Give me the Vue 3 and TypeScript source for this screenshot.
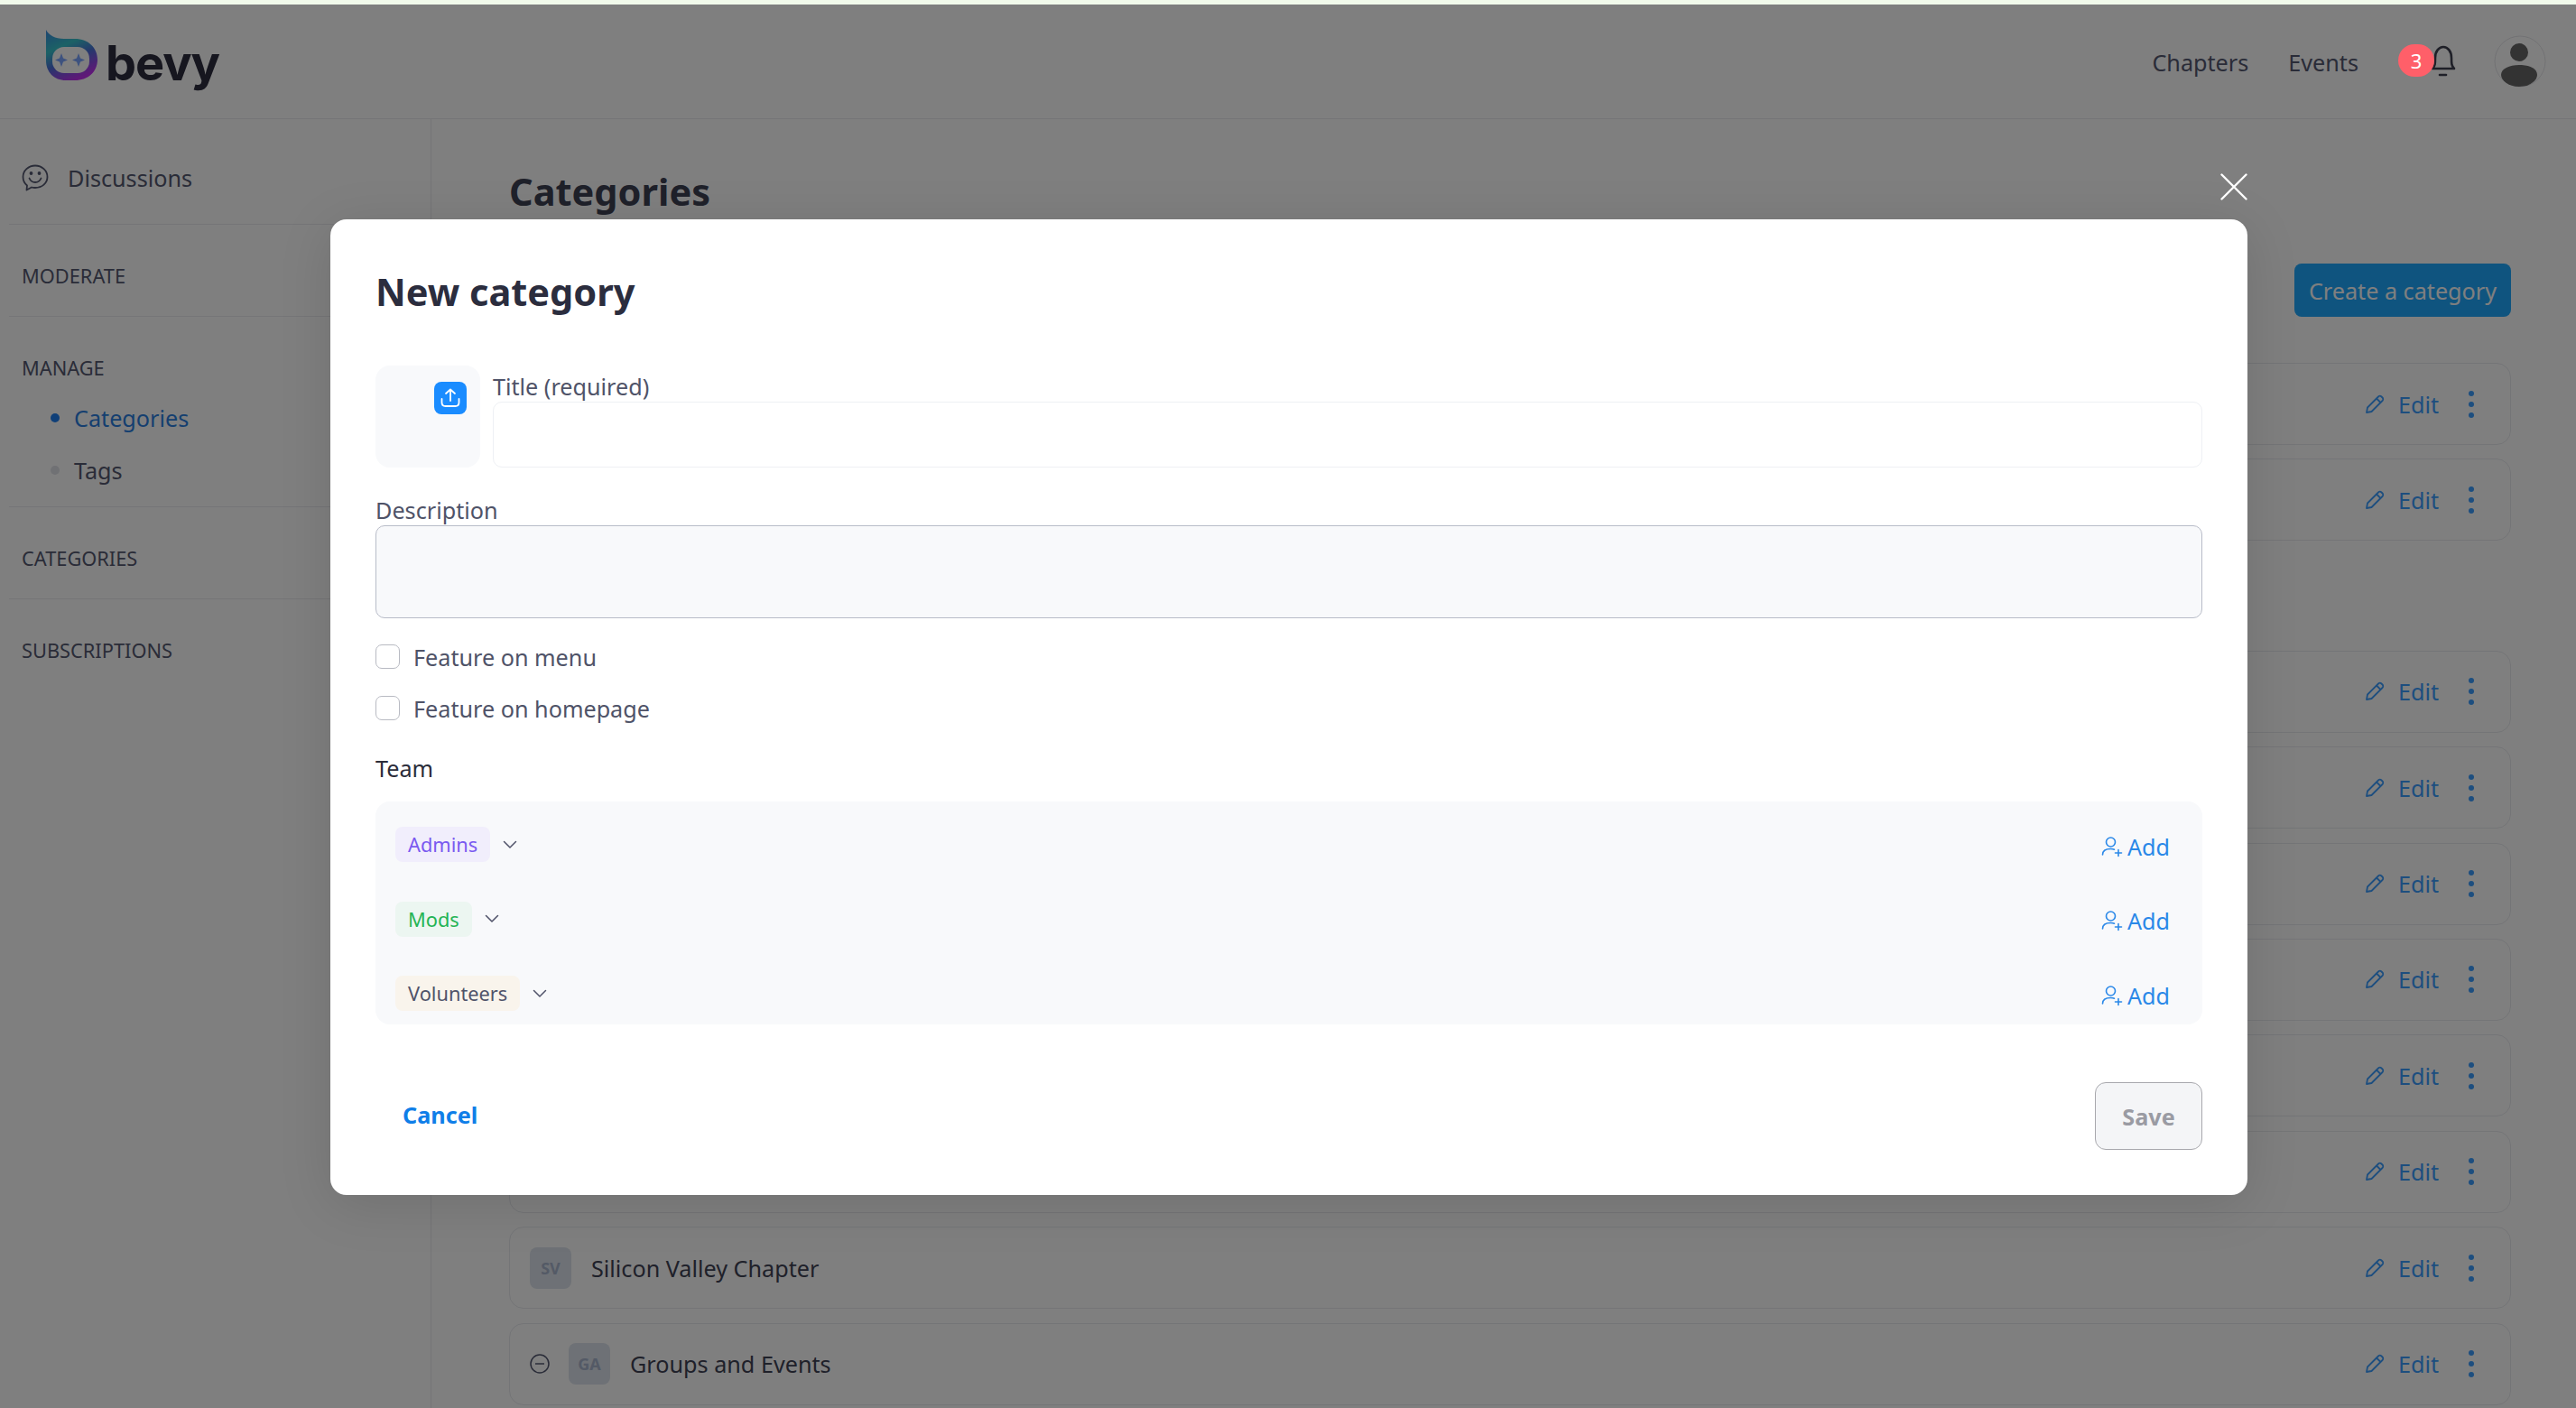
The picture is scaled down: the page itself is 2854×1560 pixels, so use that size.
<script setup lang="ts">
interface Row {
  id: number;
  name?: string;
  initials?: string;
  collapsible?: boolean;
  groupStart?: boolean;
}

const rows: Row[] = [
  { id: 1 },
  { id: 2 },
  { id: 3, groupStart: true },
  { id: 4 },
  { id: 5 },
  { id: 6 },
  { id: 7 },
  { id: 8 },
  { id: 9, name: 'Silicon Valley Chapter', initials: 'SV' },
  { id: 10, name: 'Groups and Events', initials: 'GA', collapsible: true }
];

const teams = [
  { name: 'Admins', kind: 'admins' },
  { name: 'Mods', kind: 'mods' },
  { name: 'Volunteers', kind: 'volunteers' }
];
</script>

<template>
  <div class="page">
    <div class="top-strip"></div>

    <header class="header">
      <div class="logo">
        <svg class="logo-mark" width="57" height="56" viewBox="0 0 57 56">
          <defs>
            <linearGradient id="logoGrad" x1="0.1" y1="0" x2="0.55" y2="1">
              <stop offset="0" stop-color="#3a8fe0" />
              <stop offset="0.35" stop-color="#38c4cc" />
              <stop offset="0.62" stop-color="#4a70d8" />
              <stop offset="1" stop-color="#c030f0" />
            </linearGradient>
          </defs>
          <path
            d="M0 0C3 6 10 10 20 10H32C47 10 57 20 57 33C57 47 46 56 32 56H22C9 56 0 47 0 34Z"
            fill="url(#logoGrad)"
          />
          <rect x="7" y="19" width="41" height="29" rx="13" fill="#fff" />
          <path d="M17 26L19 31.500L24 33.500L19 35.500L17 41L15 35.500L10 33.500L15 31.500Z" fill="#7aa4ff" />
          <path d="M36 26L38 31.500L43 33.500L38 35.500L36 41L34 35.500L29 33.500L34 31.500Z" fill="#7aa4ff" />
        </svg>
        <span class="logo-text">bevy</span>
      </div>

      <nav class="nav">
        <span class="nav-link">Chapters</span>
        <span class="nav-link">Events</span>
        <span class="bell-wrap">
          <span class="badge">3</span>
          <svg class="bell" width="30" height="38" viewBox="0 0 30 38" fill="none" stroke="#3f4150" stroke-width="2.600" stroke-linecap="round" stroke-linejoin="round">
            <path d="M4 27C7 24 7 21 7 15C7 8 11 3 16 3C21 3 25 8 25 15C25 21 25 24 28 27Z" />
            <path d="M12 34H19" />
          </svg>
        </span>
        <span class="avatar">
          <svg width="58" height="58" viewBox="0 0 58 58">
            <circle cx="29" cy="29" r="28" fill="#fff" stroke="#e4e4e8" stroke-width="1" />
            <circle cx="28" cy="19" r="10" fill="#666" />
            <path d="M8 44C8 37 17 33 28 33C39 33 48 37 48 44C48 50 40 57 28 57C16 57 8 50 8 44Z" fill="#666" />
          </svg>
        </span>
      </nav>
    </header>

    <div class="body">
      <aside class="sidebar">
        <div class="side-top">
          <svg width="30" height="30" viewBox="0 0 30 30" fill="none" stroke="#545870" stroke-width="1.800" stroke-linecap="round" stroke-linejoin="round">
            <path d="M15 1.500C22.500 1.500 28.500 7 28.500 14C28.500 21 22.500 26 15 26C13.500 26 12 25.800 11 25.500L5.500 28.500L6 23.500C3 21 1.500 18 1.500 14C1.500 7 7.500 1.500 15 1.500Z" />
            <path d="M8.500 15.500C10 19 12.500 20 15 20C17.500 20 20 19 21.500 15.500" />
            <circle cx="10.500" cy="10" r="1" fill="#545870" />
            <circle cx="19.500" cy="10" r="1" fill="#545870" />
          </svg>
          <span>Discussions</span>
        </div>
        <div class="side-section">MODERATE</div>
        <div class="side-section manage">
          <div>MANAGE</div>
          <div class="side-link active"><i></i>Categories</div>
          <div class="side-link"><i></i>Tags</div>
        </div>
        <div class="side-section">CATEGORIES</div>
        <div class="side-section last">SUBSCRIPTIONS</div>
      </aside>

      <main class="main">
        <h1>Categories</h1>
        <div class="main-actions">
          <button class="create-btn">Create a category</button>
        </div>
        <div class="rows">
          <div v-for="row in rows" :key="row.id" class="row" :class="{ 'group-start': row.groupStart }">
            <svg v-if="row.collapsible" class="collapse" width="22" height="22" viewBox="0 0 22 22" fill="none" stroke="#545870" stroke-width="1.500">
              <circle cx="11" cy="11" r="10" />
              <path d="M6 11H16" />
            </svg>
            <span v-if="row.initials" class="initials">{{ row.initials }}</span>
            <span v-if="row.name" class="row-name">{{ row.name }}</span>
            <span class="edit">
              <svg width="22" height="22" viewBox="0 0 22 22" fill="none" stroke="#3a9cff" stroke-width="1.800" stroke-linejoin="round">
                <path d="M2 20L3 14.500L15 2.500C16 1.500 17.500 1.500 18.500 2.500L19.500 3.500C20.500 4.500 20.500 6 19.500 7L7.500 19Z" />
                <path d="M13 4.500L17.500 9" />
              </svg>
              Edit
            </span>
            <span class="dots"><i></i><i></i><i></i></span>
          </div>
        </div>
      </main>
    </div>

    <div class="overlay">
      <div class="modal">
        <svg class="close" width="30" height="30" viewBox="0 0 30 30" stroke="#fff" stroke-width="2.400" stroke-linecap="round">
          <path d="M1.500 1.500L28.500 28.500M28.500 1.500L1.500 28.500" />
        </svg>

        <h2>New category</h2>

        <div class="title-row">
          <div class="upload">
            <span class="upload-btn">
              <svg width="24" height="24" viewBox="0 0 24 24" fill="none" stroke="#fff" stroke-width="1.800" stroke-linecap="round" stroke-linejoin="round">
                <path d="M12 15V2.500M7 7L12 2.500L17 7" />
                <path d="M2.500 13V17C2.500 19.500 4 21 6.500 21H17.500C20 21 21.500 19.500 21.500 17V13" />
              </svg>
            </span>
          </div>
          <div class="title-field">
            <label>Title (required)</label>
            <input type="text" />
          </div>
        </div>

        <label class="desc-label">Description</label>
        <textarea></textarea>

        <div class="check first"><span class="box"></span>Feature on menu</div>
        <div class="check"><span class="box"></span>Feature on homepage</div>

        <div class="team-label">Team</div>
        <div class="team">
          <div v-for="team in teams" :key="team.name" class="team-row">
            <span class="chip" :class="team.kind">{{ team.name }}</span>
            <svg class="chevron" width="16" height="10" viewBox="0 0 16 10" fill="none" stroke="#50536a" stroke-width="1.500" stroke-linecap="round" stroke-linejoin="round">
              <path d="M1.500 1.500L8 8L14.500 1.500" />
            </svg>
            <span class="add">
              <svg width="24" height="24" viewBox="0 0 24 24" fill="none" stroke="#2a88e8" stroke-width="1.600" stroke-linecap="round">
                <circle cx="10.500" cy="7" r="5" />
                <path d="M1.500 21C1.500 16.500 5 14.500 10.500 14.500C12 14.500 13.500 14.700 14.500 15.200" />
                <path d="M19 15.500V22.500M15.500 19H22.500" />
              </svg>
              Add
            </span>
          </div>
        </div>

        <div class="footer">
          <span class="cancel">Cancel</span>
          <button class="save">Save</button>
        </div>
      </div>
    </div>
  </div>
</template>

<style>
html,
body {
  margin: 0;
  background: #fff;
}
</style>

<style scoped>
* {
  box-sizing: border-box;
}

.page {
  position: relative;
  width: 2854px;
  height: 1560px;
  overflow: hidden;
  background: #fff;
  font-family: "Noto Sans", sans-serif;
  color: #545870;
}

.top-strip {
  height: 5px;
  background: #f1faeb;
}

.header {
  height: 127px;
  display: flex;
  align-items: center;
  justify-content: space-between;
  padding: 0 33px 0 51px;
  border-bottom: 1px solid #eaebef;
}

.logo {
  display: flex;
  align-items: flex-start;
  gap: 9px;
  height: 62px;
  margin-top: -8px;
}

.logo-text {
  font-family: Inter, sans-serif;
  font-size: 54px;
  line-height: 62px;
  font-weight: 700;
  color: #2c2c3e;
  letter-spacing: -1px;
  margin-top: 6px;
}

.nav {
  display: flex;
  align-items: center;
  font-size: 25.200px;
}

.nav-link {
  margin-right: 44px;
  margin-top: 1px;
}

.bell-wrap {
  position: relative;
  width: 64px;
  height: 38px;
  margin-right: 42px;
  display: block;
}

.bell {
  position: absolute;
  right: 0;
  top: 0;
}

.badge {
  position: absolute;
  left: 0;
  top: 0;
  z-index: 20;
  width: 40px;
  height: 36px;
  border-radius: 18px;
  background: #ff5f69;
  color: #fff;
  font-size: 22px;
  line-height: 36px;
  text-align: center;
}

.avatar {
  display: block;
  width: 58px;
  height: 58px;
}

.body {
  display: flex;
  height: 1428px;
}

.sidebar {
  width: 478px;
  flex-shrink: 0;
  border-right: 1px solid #eaebef;
  padding-left: 10px;
}

.side-top {
  height: 117px;
  display: flex;
  align-items: center;
  gap: 21px;
  padding: 14px 0 0 14px;
  font-size: 25.200px;
  border-bottom: 1px solid #eaebef;
}

.side-section {
  height: 102px;
  padding: 42px 0 0 14px;
  font-size: 21.800px;
  line-height: 30px;
  border-bottom: 1px solid #eaebef;
}

.side-section.manage {
  height: 211px;
}

.side-section.last {
  border-bottom: 0;
}

.side-link {
  display: flex;
  align-items: center;
  height: 36px;
  margin-top: 22px;
  font-size: 25.200px;
  padding-left: 32px;
  color: #545870;
}

.manage .side-link:first-of-type {
  margin-top: -9px;
}

.side-link i {
  width: 10px;
  height: 10px;
  border-radius: 50%;
  background: #e0e2e8;
  margin-right: 16px;
}

.side-link.active {
  color: #2b7fe0;
}

.side-link.active i {
  background: #1f7ef0;
}

.main {
  flex: 1;
  padding: 0 72px 0 86px;
}

h1 {
  margin: 52px 0 0;
  font-size: 41.500px;
  line-height: 56px;
  font-weight: 700;
  color: #3f4254;
}

.main-actions {
  display: flex;
  justify-content: flex-end;
  margin-top: 52px;
}

.create-btn {
  width: 240px;
  height: 59px;
  border: 0;
  border-radius: 8px;
  background: #1ea8ff;
  color: #fff;
  font-family: inherit;
  font-size: 25.200px;
}

.rows {
  margin-top: 51px;
  display: flex;
  flex-direction: column;
  gap: 15.400px;
}

.row {
  height: 91px;
  flex-shrink: 0;
  display: flex;
  align-items: center;
  padding: 0 22px;
  border: 1px solid #e8eaee;
  border-radius: 16px;
  font-size: 25.200px;
  color: #3f4254;
}

.row.group-start {
  margin-top: 106px;
}

.collapse {
  margin-right: 21px;
}

.initials {
  width: 46px;
  height: 46px;
  border-radius: 8px;
  background: #dde3ec;
  color: #a8b4cc;
  font-size: 18px;
  font-weight: 700;
  line-height: 46px;
  text-align: center;
  margin-right: 22px;
}

.edit {
  margin-left: auto;
  display: flex;
  align-items: center;
  gap: 15px;
  color: #3a9cff;
}

.dots {
  display: flex;
  flex-direction: column;
  gap: 6px;
  margin-left: 33px;
  margin-right: 18px;
}

.dots i {
  width: 6px;
  height: 6px;
  border-radius: 50%;
  background: #3a9cff;
}

.overlay {
  position: absolute;
  left: 0;
  right: 0;
  top: 5px;
  bottom: 0;
  z-index: 10;
  background: rgba(0, 0, 0, 0.5);
  padding: 238px 0 0 366px;
}

.modal {
  position: relative;
  width: 2124px;
  height: 1081px;
  background: #fff;
  border-radius: 18px;
  padding: 52px 50px 50px;
  box-shadow: 0 10px 60px rgba(0, 0, 0, 0.12);
}

.close {
  position: absolute;
  right: 0;
  top: -51px;
}

h2 {
  margin: 0;
  font-size: 41.500px;
  line-height: 56px;
  font-weight: 700;
  color: #2b2d3e;
}

.title-row {
  display: flex;
  gap: 14px;
  margin-top: 54px;
}

.upload {
  position: relative;
  width: 116px;
  height: 113px;
  border-radius: 16px;
  background: #f8f9fb;
  flex-shrink: 0;
}

.upload-btn {
  position: absolute;
  left: 65px;
  top: 18px;
  width: 36px;
  height: 36px;
  border-radius: 8px;
  background: #1a8cff;
  display: flex;
  align-items: center;
  justify-content: center;
}

.title-field {
  flex: 1;
}

.title-field label {
  display: block;
  padding-top: 6px;
  font-size: 25.200px;
  line-height: 34px;
  color: #4f5368;
}

.title-field input {
  display: block;
  width: 100%;
  height: 73px;
  border: 1px solid #eef0f4;
  border-radius: 10px;
  background: #fff;
  outline: none;
}

.desc-label {
  display: block;
  margin-top: 31px;
  font-size: 25.200px;
  line-height: 33px;
  color: #4f5368;
}

textarea {
  display: block;
  width: 100%;
  height: 103px;
  border: 1.500px solid #b8bcc8;
  border-radius: 10px;
  background: #f8f9fb;
  resize: none;
  outline: none;
}

.check {
  display: flex;
  align-items: center;
  height: 27px;
  font-size: 25.200px;
  color: #4f5368;
  margin-top: 30px;
}

.check.first {
  margin-top: 29px;
}

.box {
  width: 27px;
  height: 27px;
  border: 1.500px solid #b8bac2;
  border-radius: 7px;
  margin-right: 15px;
}

.team-label {
  margin-top: 35px;
  font-size: 25.200px;
  line-height: 36px;
  color: #2b2d3a;
}

.team {
  margin-top: 19px;
  height: 247px;
  padding: 28px 36px 0 22px;
  background: #f8f9fb;
  border-radius: 16px;
  display: flex;
  flex-direction: column;
  gap: 43.500px;
}

.team-row {
  display: flex;
  align-items: center;
  height: 39px;
}

.chip {
  height: 39px;
  padding: 0 14px;
  border-radius: 8px;
  font-size: 21.800px;
  line-height: 39px;
}

.chip.admins {
  background: #f1eefc;
  color: #7a5af0;
}

.chip.mods {
  background: #ecf6f1;
  color: #25b455;
}

.chip.volunteers {
  background: #f9f4ec;
  color: #50536a;
}

.chevron {
  margin-left: 14px;
}

.add {
  margin-left: auto;
  display: flex;
  align-items: center;
  gap: 5px;
  margin-top: 4px;
  font-size: 25.200px;
  color: #2a88e8;
}

.footer {
  display: flex;
  align-items: center;
  justify-content: space-between;
  margin-top: 64px;
  padding-left: 30px;
}

.cancel {
  font-size: 25.200px;
  font-weight: 700;
  color: #0f7ee8;
  margin-top: -3px;
}

.save {
  width: 119px;
  height: 75px;
  border: 1.500px solid #a8a8ad;
  border-radius: 12px;
  background: #f4f5f7;
  color: #9a9ba3;
  font-family: inherit;
  font-size: 25.200px;
  font-weight: 700;
}
</style>
